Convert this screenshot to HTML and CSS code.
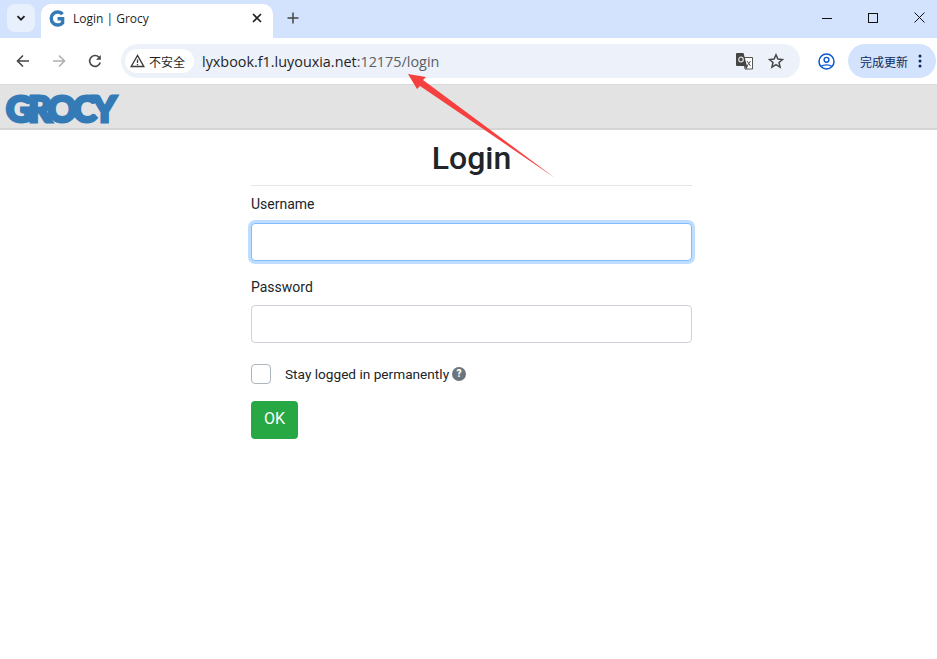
FILE: index.html
```html
<!DOCTYPE html>
<html lang="en">
<head>
<meta charset="utf-8">
<title>Login | Grocy</title>
<link rel="stylesheet" href="styles.css">
</head>
<body>
<header class="chrome">
  <div class="tabstrip">
    <button class="tab-search" type="button">
      <svg width="12" height="12" viewBox="0 0 12 12"><path d="M2.500 4.200 6 7.700l3.500-3.500" fill="none" stroke="#1f1f1f" stroke-width="1.800"/></svg>
    </button>
    <div class="tab">
      <svg class="favicon" width="16" height="17" viewBox="0 0 16 17"><path d="M13.600 4.200A6.500 6.500 0 1 0 13.600 12.800V8.700H8.500" fill="none" stroke="#337ab7" stroke-width="3.400"/></svg>
      <span class="tab-title">Login | Grocy</span>
      <svg class="tab-close" width="10" height="10" viewBox="0 0 10 10"><path d="M1 1l8 8M9 1 1 9" stroke="#1f1f1f" stroke-width="1.600"/></svg>
    </div>
    <svg class="new-tab" width="12" height="12" viewBox="0 0 12 12"><path d="M6 .5v11M.5 6h11" stroke="#444" stroke-width="1.500"/></svg>
    <div class="window-controls">
      <svg width="10" height="10" viewBox="0 0 10 10"><path d="M0 5.500h10" stroke="#111" stroke-width="1"/></svg>
      <svg width="10" height="10" viewBox="0 0 10 10"><rect x=".5" y=".5" width="9" height="9" fill="none" stroke="#111"/></svg>
      <svg width="11" height="11" viewBox="0 0 11 11"><path d="M.5.5l10 10M10.500.5l-10 10" stroke="#111" stroke-width="1"/></svg>
    </div>
  </div>
  <div class="toolbar">
    <svg class="nav-btn" width="14" height="14" viewBox="0 0 14 14"><path d="M13 7H2M7 1.500 1.500 7 7 12.500" fill="none" stroke="#474747" stroke-width="1.600"/></svg>
    <svg class="nav-btn" width="14" height="14" viewBox="0 0 14 14"><path d="M1 7h11M7 1.500 12.500 7 7 12.500" fill="none" stroke="#b0b0b0" stroke-width="1.600"/></svg>
    <svg class="nav-btn" width="14" height="14" viewBox="0 0 14 14"><path d="M12.200 8.500A5.400 5.400 0 1 1 11 3.300" fill="none" stroke="#474747" stroke-width="1.600"/><path d="M12.800 1v4.800H8z" fill="#474747"/></svg>
    <div class="omnibox">
      <div class="chip">
        <svg width="15" height="14" viewBox="0 0 15 14"><path d="M7.500 1.500 1.200 12.500h12.600z" fill="none" stroke="#3c3c3c" stroke-width="1.400"/><path d="M7.500 5.500v3.500M7.500 10v1.300" stroke="#3c3c3c" stroke-width="1.300"/></svg>
        <span class="chip-text">不安全</span>
      </div>
      <div class="url"><span class="url-host">lyxbook.f1.luyouxia.net</span>:12175/login</div>
      <svg class="translate" width="17" height="17" viewBox="0 0 17 17"><path d="M7 4.500h9.500v11.500H9z" fill="#fff" stroke="#555"/><path d="M0 1a1 1 0 0 1 1-1h6.500l3.500 13H1a1 1 0 0 1-1-1z" fill="#444"/><path d="M9 13l1 3.500 2-3.500z" fill="#444"/><circle cx="5" cy="6.500" r="2.300" fill="none" stroke="#ddd" stroke-width="1.200"/><path d="M11 8l3.500 5M14.500 8 11 13" stroke="#555" stroke-width="1"/></svg>
      <svg class="star" width="16" height="16" viewBox="0 0 16 16"><path d="M8 1.800l1.900 4.300 4.600.4-3.500 3 1.100 4.600L8 11.700l-4.100 2.400L5 9.500l-3.500-3 4.600-.4z" fill="none" stroke="#474747" stroke-width="1.500"/></svg>
    </div>
    <svg class="profile" width="17" height="17" viewBox="0 0 17 17"><circle cx="8.500" cy="8.500" r="7.500" fill="none" stroke="#0b57d0" stroke-width="1.500"/><circle cx="8.500" cy="6.800" r="2.400" fill="none" stroke="#0b57d0" stroke-width="1.400"/><path d="M3.500 13.200c1.500-1.800 8.500-1.800 10 0" fill="none" stroke="#0b57d0" stroke-width="1.400"/></svg>
    <div class="update">
      <span class="update-text">完成更新</span>
      <svg width="4" height="14" viewBox="0 0 4 14"><circle cx="2" cy="2" r="1.500" fill="#0b2a5b"/><circle cx="2" cy="7" r="1.500" fill="#0b2a5b"/><circle cx="2" cy="12" r="1.500" fill="#0b2a5b"/></svg>
    </div>
  </div>
</header>

<nav class="navbar">
  <span class="logo">GROCY</span>
</nav>

<main class="login">
  <h1 class="title">Login</h1>
  <hr class="rule">
  <form class="form">
    <div class="group">
      <label class="label" for="username">Username</label>
      <input class="input input-focus" id="username" type="text">
    </div>
    <div class="group">
      <label class="label" for="password">Password</label>
      <input class="input" id="password" type="password">
    </div>
    <div class="check-row">
      <span class="check"></span>
      <span class="check-label">Stay logged in permanently</span>
      <span class="help">?</span>
    </div>
    <button class="ok" type="button">OK</button>
  </form>
</main>

<svg class="arrow" width="937" height="659" viewBox="0 0 937 659"><polygon points="408,74 426,77 423,80 555,178 420,86 417,89" fill="#f6403f"/></svg>
</body>
</html>
```

FILE: styles.css
```css
* { box-sizing: border-box; }
html, body { margin: 0; padding: 0; background: #fff; }
body { font-family: Roboto, "Noto Sans", sans-serif; color: #212529; height: 659px; overflow: hidden; }

.chrome { height: 85px; background: #fff; border-bottom: 1px solid #d9d9d9; }

.tabstrip { height: 38px; background: #d3e3fd; display: flex; align-items: flex-start; padding: 4px 0 0 7px; }
.tab-search { width: 28px; height: 28px; border: 0; padding: 0; border-radius: 8px; background: #e9f0fd; display: flex; align-items: center; justify-content: center; }
.tab { width: 232px; height: 34px; margin-left: 6px; background: #fff; border-radius: 10px 10px 0 0; display: flex; align-items: center; padding: 0 0 6px 8px; }
.favicon { flex: none; }
.tab-title { margin-left: 8px; font: 12px "Open Sans", "Noto Sans", sans-serif; color: #1f1f1f; flex: 1; }
.tab-close { margin-right: 11px; flex: none; }
.new-tab { margin: 8px 0 0 14px; flex: none; }
.window-controls { margin-left: auto; display: flex; align-items: center; gap: 36px; padding: 8px 12px 0 0; }

.toolbar { height: 46px; display: flex; align-items: center; padding: 0 1px 0 16px; }
.nav-btn { margin-right: 22px; flex: none; }
.omnibox { width: 679px; height: 34px; margin-left: -3px; border-radius: 17px; background: #ecf1fa; display: flex; align-items: center; padding-left: 4px; }
.chip { width: 69px; height: 24px; background: #fff; border-radius: 12px; display: flex; align-items: center; gap: 4px; padding-left: 5px; flex: none; }
.chip-text { font: 12px "Noto Sans CJK SC", sans-serif; color: #1f1f1f; }
.url { margin-left: 8px; font: 14.38px "Open Sans", "Noto Sans", sans-serif; color: #5a5f66; flex: 1; white-space: nowrap; }
.url-host { color: #1f1f1f; }
.translate { margin-right: 15px; flex: none; }
.star { margin-right: 16px; flex: none; }
.profile { margin-left: 18px; flex: none; }
.update { width: 88px; height: 34px; margin-left: 13px; border-radius: 17px; background: #d3e3fd; display: flex; align-items: center; padding-left: 12px; gap: 10px; }
.update-text { font: 12px "Noto Sans CJK SC", sans-serif; color: #0b2a5b; white-space: nowrap; }

.navbar { height: 45px; background: #e3e3e3; border-bottom: 2px solid #d5d5d5; display: flex; align-items: center; padding: 2px 0 0 6px; }
.logo { font: 900 36px/36px Lato, "Open Sans", sans-serif; color: #337ab7; -webkit-text-stroke: 3px #337ab7; letter-spacing: -3.800px; }

.login { width: 441px; margin-left: 251px; }
.title { margin: 9px 0 0; font-size: 32px; line-height: 38px; font-weight: 500; text-align: center; color: #212529; }
.rule { margin: 8px 0 0; border: 0; border-top: 1px solid rgba(0, 0, 0, .1); }
.form { display: flex; flex-direction: column; align-items: flex-start; }
.group { width: 100%; margin-top: 8px; margin-bottom: 7px; }
.group + .group { margin-top: 9px; }
.group + .group .label { margin-bottom: 7px; }
.label { display: block; font-size: 14px; line-height: 21px; margin-bottom: 8px; }
.input { display: block; width: 100%; height: 38px; border: 1px solid #ced4da; border-radius: 4px; background: #fff; padding: 6px 12px; outline: 0; }
.input-focus { border-color: #80bdff; box-shadow: 0 0 0 3px rgba(0, 123, 255, .25); }
.check-row { display: flex; align-items: center; margin-top: 14px; height: 20px; }
.check { width: 20px; height: 20px; border: 1px solid #adb5bd; border-radius: 4px; background: #fff; }
.check-label { margin-left: 14px; font-size: 13.65px; }
.help { width: 14px; height: 14px; margin-left: 3px; border-radius: 50%; background: #6c757d; color: #fff; font-size: 10px; font-weight: 900; line-height: 14px; text-align: center; }
.ok { margin-top: 17px; width: 47px; height: 38px; border: 0; border-radius: 4px; background: #28a745; color: #fff; font: 16px/36px Roboto, sans-serif; padding: 0 0 2px; }

.arrow { position: absolute; left: 0; top: 0; pointer-events: none; }
```
